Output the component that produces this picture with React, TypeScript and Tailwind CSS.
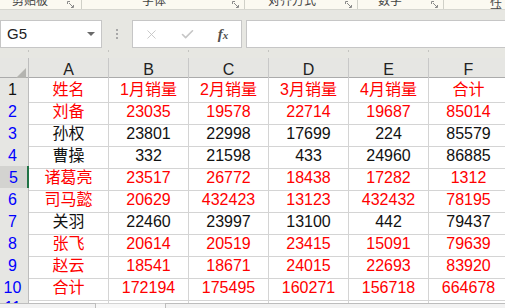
import React from "react";
import { X, Check } from "lucide-react";

type Row = { n: number; red: boolean; cells: string[] };

const rows: Row[] = [
  { n: 1, red: true, cells: ["姓名", "1月销量", "2月销量", "3月销量", "4月销量", "合计"] },
  { n: 2, red: true, cells: ["刘备", "23035", "19578", "22714", "19687", "85014"] },
  { n: 3, red: false, cells: ["孙权", "23801", "22998", "17699", "224", "85579"] },
  { n: 4, red: false, cells: ["曹操", "332", "21598", "433", "24960", "86885"] },
  { n: 5, red: true, cells: ["诸葛亮", "23517", "26772", "18438", "17282", "1312"] },
  { n: 6, red: true, cells: ["司马懿", "20629", "432423", "13123", "432432", "78195"] },
  { n: 7, red: false, cells: ["关羽", "22460", "23997", "13100", "442", "79437"] },
  { n: 8, red: true, cells: ["张飞", "20614", "20519", "23415", "15091", "79639"] },
  { n: 9, red: true, cells: ["赵云", "18541", "18671", "24015", "22693", "83920"] },
  { n: 10, red: true, cells: ["合计", "172194", "175495", "160271", "156718", "664678"] },
];

const cols = ["A", "B", "C", "D", "E", "F"];

function Launcher() {
  return (
    <svg width="7" height="7" viewBox="0 0 7 7" className="shrink-0 mt-[1px]">
      <path d="M0.5 3 V0.5 H3" stroke="#8a8a8a" strokeWidth="1" fill="none" />
      <path d="M6.5 4 V6.5 H4" stroke="#8a8a8a" strokeWidth="1" fill="none" />
      <path d="M2 2 L6 6" stroke="#8a8a8a" strokeWidth="1" />
    </svg>
  );
}

export default function App() {
  return (
    <div className="w-[505px] h-[308px] overflow-hidden bg-white flex flex-col font-['Liberation_Sans','Noto_Sans_CJK_SC',sans-serif]">
      {/* ribbon group labels (cut off) */}
      <div className="h-[10px] shrink-0 bg-[#fbf9f1] border-b border-[#d6d6d0] flex overflow-hidden text-[12px] leading-[12px] text-[#444] font-['Noto_Sans_CJK_SC',sans-serif]">
        <div className="w-[82px] shrink-0 h-full border-r border-[#d0d0c8] flex justify-between pl-[12px] pr-[7px]">
          <span className="-mt-[6px]">剪贴板</span>
          <Launcher />
        </div>
        <div className="w-[163px] shrink-0 h-full border-r border-[#d0d0c8] flex justify-between pl-[60px] pr-[5px]">
          <span className="-mt-[6px]">字体</span>
          <Launcher />
        </div>
        <div className="w-[113px] shrink-0 h-full border-r border-[#d0d0c8] flex justify-between pl-[23px] pr-[5px]">
          <span className="-mt-[6px]">对齐方式</span>
          <Launcher />
        </div>
        <div className="w-[86px] shrink-0 h-full border-r border-[#d0d0c8] flex justify-between pl-[20px] pr-[5px]">
          <span className="-mt-[6px]">数字</span>
          <Launcher />
        </div>
        <div className="flex-1 h-full pl-[46px]">
          <span className="-mt-[6px] block">样式</span>
        </div>
      </div>

      {/* formula bar */}
      <div className="h-[38px] shrink-0 bg-[#e7e7e2] flex items-end">
        <div className="w-[102px] h-[28px] shrink-0 bg-white border border-[#c6c6c6] flex items-center justify-between pl-[6px] pr-[6px]">
          <span className="text-[15px] text-[#222]">G5</span>
          <span className="w-0 h-0 border-l-[4px] border-r-[4px] border-t-[4px] border-l-transparent border-r-transparent border-t-[#6a6a6a]" />
        </div>
        <div className="w-[30px] h-[28px] shrink-0 flex flex-col items-center justify-center gap-[2px]">
          <span className="w-[2px] h-[2px] bg-[#a8a8a8]" />
          <span className="w-[2px] h-[2px] bg-[#a8a8a8]" />
          <span className="w-[2px] h-[2px] bg-[#a8a8a8]" />
        </div>
        <div className="w-[110px] h-[28px] shrink-0 bg-white border border-[#c6c6c6] flex items-center">
          <div className="w-[36px] flex justify-center">
            <X size={15} strokeWidth={1.4} color="#c2c2c2" />
          </div>
          <div className="w-[36px] flex justify-center">
            <Check size={15} strokeWidth={2.6} color="#c6c6c6" />
          </div>
          <div className="w-[36px] flex justify-center items-baseline font-['Liberation_Serif',serif] italic text-[#505050]">
            <span className="text-[15px] font-bold">f</span>
            <span className="text-[11px] font-bold">x</span>
          </div>
        </div>
        <div className="ml-[4px] flex-1 h-[28px] bg-white border border-r-0 border-[#c6c6c6]" />
      </div>
      <div className="h-[10px] shrink-0 bg-[#e7e7e2] grid grid-cols-[29px_80px_80px_80px_80px_80px_80px]">
        {[0, 1, 2, 3, 4, 5, 6].map((i) => (
          <div key={i} className="flex justify-end pt-[2px]">
            <span className="w-[1px] h-[2px] bg-[#c4c4c0]" />
          </div>
        ))}
      </div>

      {/* column headers */}
      <div className="h-[20px] shrink-0 bg-[#e6e6e3] grid grid-cols-[29px_80px_80px_80px_80px_80px_80px] border-b border-[#ababab]">
        <div className="border-r border-[#bdbdbd] flex items-end justify-end pr-[2px] pb-[2px]">
          <svg width="12" height="12" viewBox="0 0 12 12">
            <polygon points="12,0 12,12 0,12" fill="#b4b4b0" />
          </svg>
        </div>
        {cols.map((c) => (
          <div key={c} className="border-r border-[#c8c8c8] flex items-center justify-center text-[16px] text-[#222]">
            {c}
          </div>
        ))}
        <div />
      </div>

      {/* data rows */}
      {rows.map((r) => (
        <div key={r.n} className="h-[22px] shrink-0 grid grid-cols-[29px_80px_80px_80px_80px_80px_80px]">
          <div
            className={
              r.n === 5
                ? "bg-[#d3d3d0] border-r-2 border-r-[#217346] border-b border-b-[#c8c8c8] flex items-center justify-center pl-[0px] text-[16px] text-[#0000ff]"
                : "bg-[#e6e6e3] border-r border-r-[#bdbdbd] border-b border-b-[#d0d0d0] flex items-center justify-center pr-[3px] text-[16px] " +
                  (r.n === 1 ? "text-[#111]" : "text-[#0000ff]")
            }
          >
            {r.n}
          </div>
          {r.cells.map((v, i) => (
            <div
              key={i}
              className={
                "border-r border-b border-[#d4d4d4] flex items-center justify-center text-[16px] " +
                (r.red ? "text-[#ff0000]" : "text-[#111]")
              }
            >
              {v}
            </div>
          ))}
          <div className="border-b border-[#d4d4d4]" />
        </div>
      ))}

      {/* row 11 partial */}
      <div className="h-[5px] shrink-0 grid grid-cols-[29px_80px_80px_80px_80px_80px_80px] overflow-hidden">
        <div className="bg-[#e6e6e3] border-r border-[#bdbdbd] flex justify-center pr-[3px] text-[16px] leading-[16px] text-[#0000ff] pt-[2px]">
          11
        </div>
        {[0, 1, 2, 3, 4, 5].map((i) => (
          <div key={i} className="border-r border-[#d4d4d4]" />
        ))}
        <div />
      </div>

      {/* bottom bar */}
      <div className="flex-1 flex bg-[#ececec]">
        <div className="w-[96px] border-t border-r border-[#bdbdbd] bg-[#f2f2f2]" />
        <div className="w-[69px] border-t border-[#d4d4d4] bg-[#f7f7f7]" />
        <div className="flex-1 border-t border-l border-[#bdbdbd] bg-[#f2f2f2]" />
      </div>
    </div>
  );
}
